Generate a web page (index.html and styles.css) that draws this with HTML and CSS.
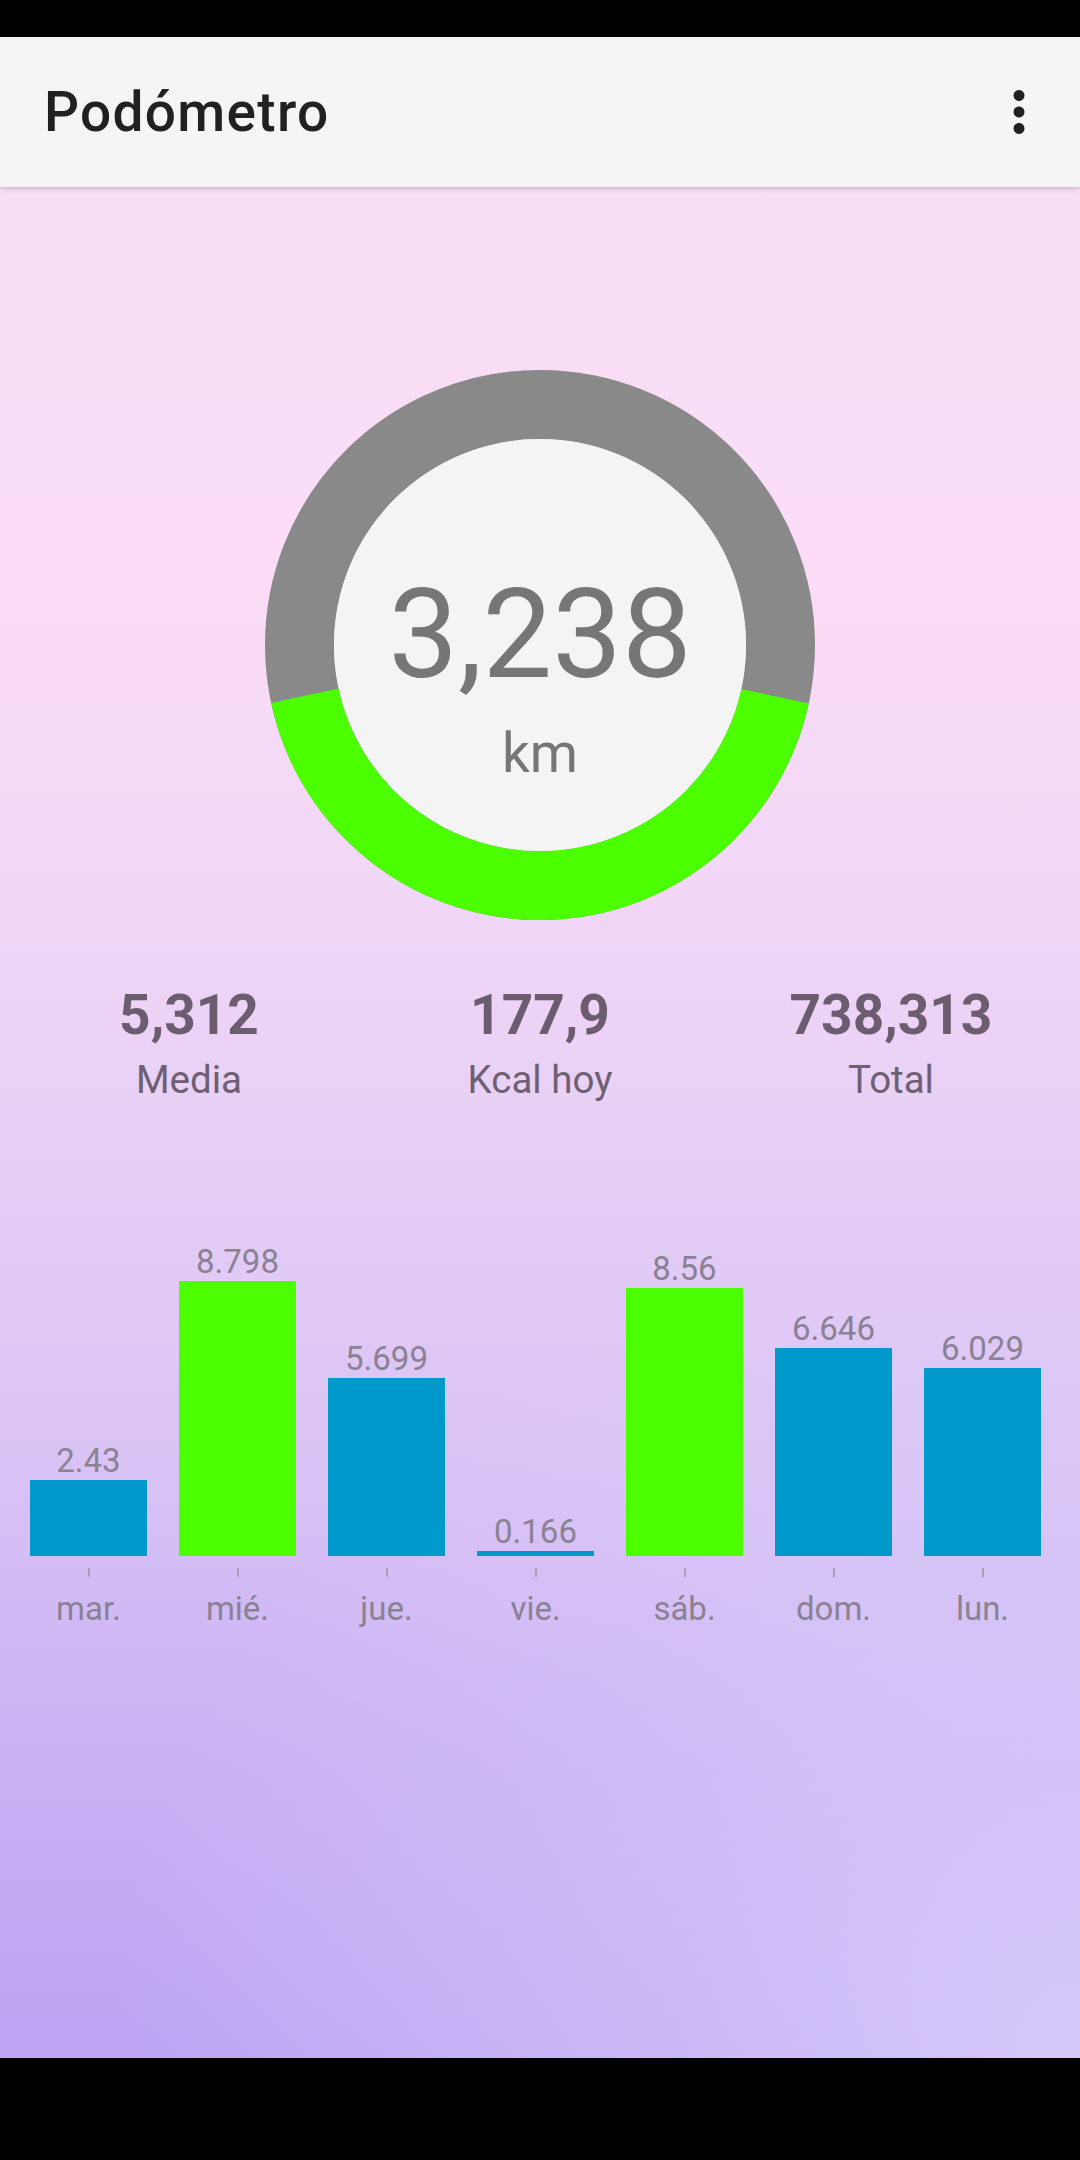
FILE: index.html
```html
<!DOCTYPE html>
<html lang="es">
<head>
  <meta charset="UTF-8">
  <meta name="viewport" content="width=device-width, initial-scale=1.0">
  <title>Podómetro</title>
  <link rel="stylesheet" href="styles.css">
</head>
<body>
  <div class="status-bar"></div>

  <header class="app-bar">
    <h1 class="app-title">Podómetro</h1>
    <svg class="overflow-icon" viewBox="0 0 24 24" width="66" height="66">
      <path d="M12 8c1.1 0 2-.9 2-2s-.9-2-2-2-2 .9-2 2 .9 2 2 2zm0 2c-1.1 0-2 .9-2 2s.9 2 2 2 2-.9 2-2-.9-2-2-2zm0 6c-1.1 0-2 .9-2 2s.9 2 2 2 2-.9 2-2-.9-2-2-2z" fill="#212121"/>
    </svg>
  </header>

  <main class="content">
    <!-- today's distance against the daily goal -->
    <div class="gauge">
      <svg class="gauge-ring" viewBox="0 0 550 550" width="550" height="550">
        <circle cx="275" cy="275" r="240.5" fill="none" stroke="#898989" stroke-width="69"/>
        <circle cx="275" cy="275" r="240.5" fill="none" stroke="#4cff00" stroke-width="69"
                stroke-dasharray="652.4 1511.1" transform="rotate(12.3 275 275)"/>
        <circle cx="275" cy="275" r="206" fill="#f4f4f4"/>
      </svg>
      <div class="gauge-text">
        <div class="gauge-value">3,238</div>
        <div class="gauge-unit">km</div>
      </div>
    </div>

    <div class="stats">
      <div class="stat">
        <div class="stat-value">5,312</div>
        <div class="stat-label">Media</div>
      </div>
      <div class="stat">
        <div class="stat-value">177,9</div>
        <div class="stat-label">Kcal hoy</div>
      </div>
      <div class="stat">
        <div class="stat-value">738,313</div>
        <div class="stat-label">Total</div>
      </div>
    </div>

    <!-- last 7 days, bar height = km * 31.26px -->
    <div class="chart">
      <div class="day">
        <span class="bar-value">2.43</span>
        <div class="bar" style="height: 76px"></div>
        <span class="tick"></span>
        <span class="day-label">mar.</span>
      </div>
      <div class="day">
        <span class="bar-value">8.798</span>
        <div class="bar bar-goal" style="height: 275px"></div>
        <span class="tick"></span>
        <span class="day-label">mié.</span>
      </div>
      <div class="day">
        <span class="bar-value">5.699</span>
        <div class="bar" style="height: 178px"></div>
        <span class="tick"></span>
        <span class="day-label">jue.</span>
      </div>
      <div class="day">
        <span class="bar-value">0.166</span>
        <div class="bar" style="height: 5px"></div>
        <span class="tick"></span>
        <span class="day-label">vie.</span>
      </div>
      <div class="day">
        <span class="bar-value">8.56</span>
        <div class="bar bar-goal" style="height: 268px"></div>
        <span class="tick"></span>
        <span class="day-label">sáb.</span>
      </div>
      <div class="day">
        <span class="bar-value">6.646</span>
        <div class="bar" style="height: 208px"></div>
        <span class="tick"></span>
        <span class="day-label">dom.</span>
      </div>
      <div class="day">
        <span class="bar-value">6.029</span>
        <div class="bar" style="height: 188px"></div>
        <span class="tick"></span>
        <span class="day-label">lun.</span>
      </div>
    </div>
  </main>

  <div class="nav-bar"></div>
</body>
</html>
```

FILE: styles.css
```css
body {
  margin: 0;
  width: 1080px;
  height: 2160px;
  display: flex;
  flex-direction: column;
  font-family: Roboto, "Noto Sans", sans-serif;
  background: #000000;
}

.status-bar {
  height: 37px;
  background: #000000;
}

.app-bar {
  position: relative;
  z-index: 1;
  height: 150px;
  display: flex;
  align-items: center;
  justify-content: space-between;
  padding: 0 28px 0 44px;
  background: #f5f5f5;
  box-shadow: 0 2px 4px rgba(0, 0, 0, 0.18);
}

.app-title {
  margin: 0;
  font-size: 55px;
  font-weight: 500;
  letter-spacing: 1.3px;
  color: #212121;
}

.content {
  flex: 1;
  background:
    radial-gradient(ellipse 90% 45% at 100% 100%, rgba(222, 212, 252, 0.75), rgba(222, 212, 252, 0)),
    linear-gradient(180deg, #f7dff4 0%, #fbdcf7 22%, #f2d7f6 36%, #e8d0f6 50%, #d9c3f5 68%, #c8b0f4 85%, #bca4f3 100%);
}

/* gauge */
.gauge {
  display: grid;
  width: 550px;
  height: 550px;
  margin: 183px auto 0;
}

.gauge-ring,
.gauge-text {
  grid-area: 1 / 1;
}

.gauge-text {
  padding-top: 203px;
  text-align: center;
  color: #767676;
}

.gauge-value {
  font-size: 124px;
  line-height: 124px;
}

.gauge-unit {
  margin-top: 29px;
  font-size: 55px;
  line-height: 55px;
}

/* stats row */
.stats {
  display: flex;
  padding: 0 13.5px;
  margin-top: 68px;
}

.stat {
  flex: 1;
  text-align: center;
}

.stat-value {
  font-size: 55px;
  line-height: 55px;
  font-weight: 700;
  color: #6b5d6f;
}

.stat-label {
  margin-top: 18px;
  font-size: 38.5px;
  line-height: 38.5px;
  color: #6e6073;
}

/* bar chart */
.chart {
  display: flex;
  align-items: flex-end;
  margin: 145px 0 0 14px;
}

.day {
  width: 149px;
  display: flex;
  flex-direction: column;
  align-items: center;
  color: #8a8292;
  font-size: 33px;
  line-height: 33px;
}

.bar-value {
  margin-bottom: 3px;
}

.bar {
  width: 117px;
  background: #0099cc;
}

.bar-goal {
  background: #4cff00;
}

.tick {
  width: 2px;
  height: 9px;
  margin-top: 12px;
  background: #a89fb1;
}

.day-label {
  margin-top: 15px;
}

.nav-bar {
  height: 102px;
  background: #000000;
}
```
